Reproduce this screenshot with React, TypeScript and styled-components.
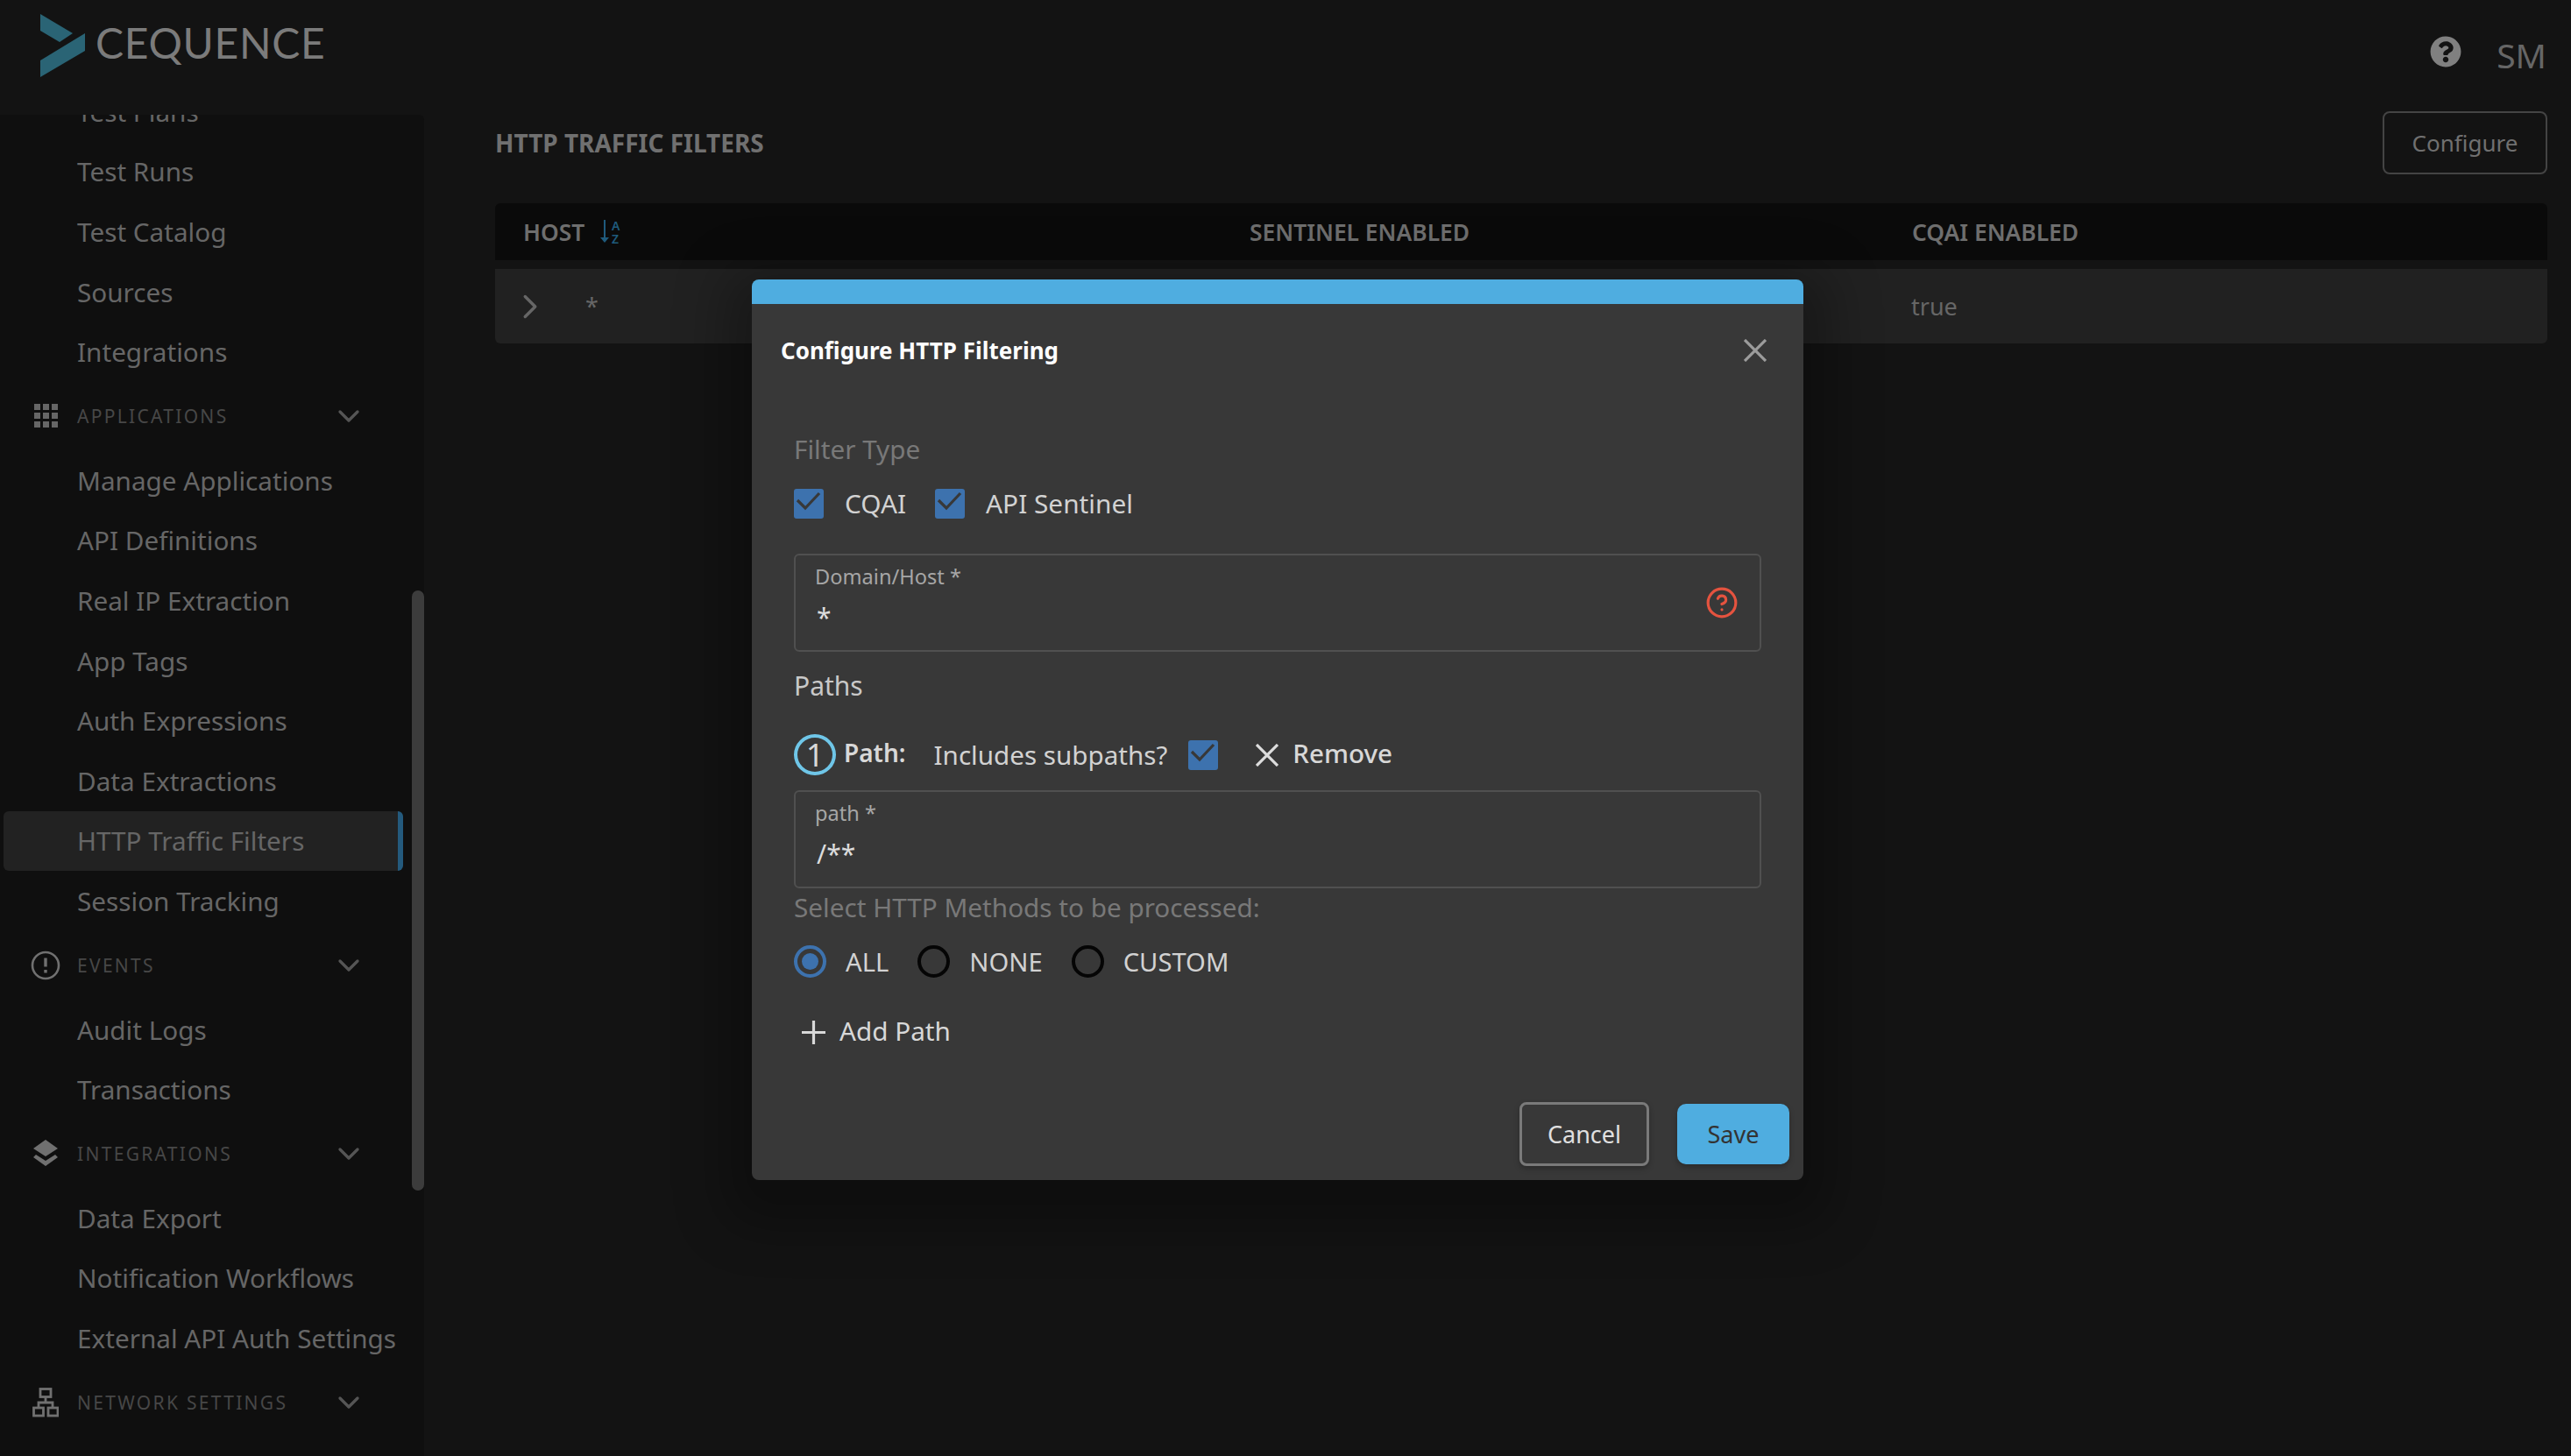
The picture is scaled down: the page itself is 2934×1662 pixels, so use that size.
import * as React from 'react'
import styled, { createGlobalStyle } from 'styled-components'
import { ChevronDown, ChevronRight, CircleHelp } from 'lucide-react'
import { FaQuestionCircle } from 'react-icons/fa'

const font = `"Noto Sans", "Open Sans", sans-serif`

const GlobalStyle = createGlobalStyle`
  html, body { margin: 0; padding: 0; background: #131313; }
  body { font-family: ${font}; }
  * { box-sizing: border-box; }
`

const Page = styled.div`
  position: relative;
  width: 2934px;
  height: 1662px;
  overflow: hidden;
  display: grid;
  grid-template-columns: 484px 1fr;
  grid-template-rows: 131px 1fr;
  background: #131313;
`

const Header = styled.header`
  grid-column: 1 / 3;
  display: flex;
  justify-content: space-between;
  padding: 16px 28px 0 46px;
`

const Logo = styled.div`
  display: flex;
  align-items: flex-start;
  gap: 12px;
`

const LogoText = styled.span`
  font-family: Lato, sans-serif;
  font-size: 48px;
  line-height: 48px;
  margin-top: 9px;
  letter-spacing: 0.7px;
  color: #7b7b7b;
`

const HeaderRight = styled.div`
  display: flex;
  align-items: flex-start;
  gap: 40px;
  padding-top: 25px;
  color: #808080;
`

const Initials = styled.span`
  font-size: 39px;
  line-height: 40px;
  margin-top: 2px;
  color: #666;
`

const Sidebar = styled.nav`
  background: #0f0f0f;
  border-top-right-radius: 6px;
  overflow: hidden;
  position: relative;
`

const NavList = styled.div`
  margin-top: -38px;
  padding-right: 24px;
`

const NavItem = styled.div<{ $active?: boolean }>`
  height: 68.6px;
  margin-left: 4px;
  padding-left: 84px;
  display: flex;
  align-items: center;
  font-size: 29.7px;
  white-space: nowrap;
  color: #666;
  border-radius: 6px;
  background: ${p => (p.$active ? '#222' : 'transparent')};
  border-right: ${p => (p.$active ? '6px solid #245a7d' : '0')};
`

const SectionHead = styled.div`
  height: 78px;
  display: grid;
  grid-template-columns: 88px 1fr 40px;
  align-items: center;
  padding-right: 42px;
  color: #666;
`

const SectionIcon = styled.span`
  display: flex;
  justify-content: center;
  width: 104px;
`

const SectionLabel = styled.span`
  font-size: 21px;
  letter-spacing: 2.3px;
  color: #474747;
`

const Scrollbar = styled.div`
  position: absolute;
  top: 543px;
  right: 0;
  width: 14px;
  height: 685px;
  border-radius: 7px;
  background: #3c3c3c;
`

const Main = styled.main`
  padding: 0 27px 0 81px;
`

const TitleRow = styled.div`
  display: flex;
  justify-content: space-between;
  align-items: flex-start;
  height: 105px;
  margin-top: -4px;
`

const PageTitle = styled.h1`
  margin: 17px 0 0;
  font-size: 28px;
  line-height: 38px;
  font-weight: 700;
  color: #707070;
`

const OutlineButton = styled.button`
  width: 188px;
  height: 72px;
  background: transparent;
  border: 2px solid #444;
  border-radius: 8px;
  font-family: ${font};
  font-size: 26px;
  color: #707070;
`

const Table = styled.div`
  display: flex;
  flex-direction: column;
  gap: 10px;
`

const TableHead = styled.div`
  display: grid;
  grid-template-columns: 829px 756px 1fr;
  align-items: center;
  height: 65px;
  padding-left: 32px;
  background: #0a0a0a;
  border-radius: 6px 6px 0 0;
`

const HeadCell = styled.div`
  display: flex;
  align-items: center;
  gap: 18px;
  font-size: 26.4px;
  font-weight: 600;
  color: #6e6e6e;
`

const TableRow = styled.div`
  display: grid;
  grid-template-columns: 86px 1513px 1fr;
  align-items: center;
  height: 85px;
  padding-left: 17px;
  background: #212121;
  border-radius: 0 0 6px 6px;
  font-size: 27px;
  color: #666;
`

const Modal = styled.section`
  position: absolute;
  top: 319px;
  left: 858px;
  width: 1200px;
  height: 1028px;
  display: flex;
  flex-direction: column;
  background: #383838;
  border-radius: 8px;
  border-top: 28px solid #4fade0;
  box-shadow: 0 20px 60px 30px rgba(0, 0, 0, 0.28);
`

const ModalHead = styled.div`
  display: flex;
  justify-content: space-between;
  align-items: center;
  height: 106px;
  padding: 0 42px 0 33px;
  color: #9c9c9c;
`

const ModalTitle = styled.h2`
  margin: 0;
  font-size: 26px;
  font-weight: 700;
  color: #fff;
`

const ModalBody = styled.div`
  flex: 1;
  padding: 40px 48px 0;
  display: flex;
  flex-direction: column;
`

const MutedText = styled.div<{ $top?: number }>`
  font-size: 29.7px;
  line-height: 40px;
  margin-top: ${p => p.$top ?? 0}px;
  color: #787878;
`

const Heading = styled.div`
  font-size: 30px;
  line-height: 40px;
  margin-top: 19px;
  color: #c8c8c8;
`

const OptionRow = styled.div<{ $top: number; $gap: number }>`
  display: flex;
  align-items: center;
  gap: ${p => p.$gap}px;
  margin-top: ${p => p.$top}px;
`

const Option = styled.label<{ $gap: number; $size: number }>`
  display: flex;
  align-items: center;
  gap: ${p => p.$gap}px;
  font-size: ${p => p.$size}px;
  line-height: 34px;
  color: #d2d2d2;
`

const CheckBox = styled.span`
  display: flex;
  align-items: center;
  justify-content: center;
  flex: none;
  width: 34px;
  height: 34px;
  border-radius: 3px;
  background: #3d72ae;
  color: #383838;
`

const Radio = styled.span<{ $on?: boolean }>`
  display: flex;
  align-items: center;
  justify-content: center;
  width: 37px;
  height: 37px;
  border-radius: 50%;
  border: 4px solid ${p => (p.$on ? '#3d72ae' : '#050505')};
  &::after {
    content: '';
    width: 19px;
    height: 19px;
    border-radius: 50%;
    background: ${p => (p.$on ? '#3d72ae' : 'transparent')};
  }
`

const Field = styled.div<{ $top: number }>`
  position: relative;
  height: 112px;
  margin-top: ${p => p.$top}px;
  padding: 8px 22px;
  border: 2px solid #505050;
  border-radius: 6px;
`

const FieldLabel = styled.div`
  font-size: 23.6px;
  line-height: 33px;
  color: #a6a6a6;
`

const FieldValue = styled.div`
  font-size: 30px;
  line-height: 40px;
  margin-top: 10px;
  padding-left: 2px;
  color: #dcdcdc;
`

const FieldHelp = styled(CircleHelp)`
  position: absolute;
  top: 35px;
  right: 24px;
  color: #e5533f;
`

const PathRow = styled.div`
  display: flex;
  align-items: center;
  height: 47px;
  margin-top: 35px;
`

const StepBadge = styled.span`
  display: flex;
  align-items: center;
  justify-content: center;
  width: 48px;
  height: 47px;
  border: 4px solid #6fc6e8;
  border-radius: 50%;
  font-size: 36px;
  color: #d8d8d8;
`

const PathLabel = styled.span`
  margin: -5px 32px 0 9px;
  font-size: 28px;
  font-weight: 600;
  color: #d8d8d8;
`

const SubpathText = styled.span`
  font-size: 29.6px;
  margin-right: 24px;
  color: #d2d2d2;
`

const RemoveGlyph = styled.span`
  display: flex;
  margin-left: 43px;
  color: #ddd;
`

const RemoveText = styled.span`
  margin: -4px 0 0 16px;
  font-size: 29.6px;
  font-weight: 500;
  color: #d8d8d8;
`

const AddPath = styled.div`
  display: flex;
  align-items: center;
  gap: 16px;
  height: 40px;
  margin-top: 40px;
  padding-left: 9px;
  font-size: 29.7px;
  color: #d8d8d8;
  svg {
    margin-top: 4px;
  }
`

const Actions = styled.div`
  display: flex;
  justify-content: flex-end;
  align-items: center;
  gap: 32px;
  padding: 0 16px 16px;
`

const CancelButton = styled.button`
  width: 148px;
  height: 73px;
  background: transparent;
  border: 3px solid #7a7a7a;
  border-radius: 8px;
  font-family: ${font};
  font-size: 27px;
  color: #e0e0e0;
  box-shadow: 0 3px 6px rgba(0, 0, 0, 0.25);
`

const SaveButton = styled.button`
  width: 128px;
  height: 69px;
  background: #4fade0;
  border: 0;
  border-radius: 10px;
  font-family: ${font};
  font-size: 27px;
  color: #333;
  box-shadow: 0 3px 6px rgba(0, 0, 0, 0.25);
`

const RowChevron = styled(ChevronRight)`
  display: block;
`

const LogoMark = () => (
  <svg width="51" height="72" viewBox="0 0 51 72">
    <polygon points="0,0 37,22 22,32 0,19" fill="#2a6475" />
    <polygon points="51,22 51,42 0,72 0,53" fill="#2a6475" />
  </svg>
)

const GridIcon = () => (
  <svg width="27" height="27" viewBox="0 0 27 27" fill="#666">
    {[0, 10, 20].map(y => [0, 10, 20].map(x => <rect key={`${x}-${y}`} x={x} y={y} width="7" height="7" />))}
  </svg>
)

const AlertIcon = () => (
  <svg width="34" height="34" viewBox="0 0 34 34" fill="none" stroke="#707070">
    <circle cx="17" cy="17" r="15" strokeWidth="2.6" />
    <path d="M17 8.5v10M17 22v3.5" strokeWidth="3.4" />
  </svg>
)

const LayersIcon = () => (
  <svg width="30" height="32" viewBox="0 0 30 32" fill="#707070">
    <polygon points="15,0 29,10 15,19 1,10" />
    <polygon points="4,17 15,24 26,17 29,20 15,30 1,20" />
  </svg>
)

const NetworkIcon = () => (
  <svg width="30" height="34" viewBox="0 0 30 34" fill="none" stroke="#707070" strokeWidth="2.8">
    <rect x="9" y="1.5" width="12" height="9" />
    <rect x="1.5" y="23" width="11" height="9" />
    <rect x="18" y="23" width="11" height="9" />
    <path d="M15 10.5v6M7 23v-6h16v6" />
  </svg>
)

const SortIcon = () => (
  <svg width="27" height="28" viewBox="0 0 27 28" fill="#1f5b7d">
    <path d="M5 0v22" stroke="#1f5b7d" strokeWidth="2" />
    <polygon points="0,20 10,20 5,26" />
    <text x="13" y="12" fontSize="14" fontFamily="Noto Sans">A</text>
    <text x="13" y="27" fontSize="14" fontFamily="Noto Sans">Z</text>
  </svg>
)

const Tick = () => (
  <svg width="34" height="34" viewBox="0 0 34 34" fill="none" stroke="currentColor" strokeWidth="3.2">
    <path d="M4 13l9 9L29 5" />
  </svg>
)

const Cross = () => (
  <svg width="26" height="26" viewBox="0 0 26 26" fill="none" stroke="currentColor" strokeWidth="3.2">
    <path d="M1 1l24 24M25 1L1 25" />
  </svg>
)

const PlusGlyph = () => (
  <svg width="27" height="27" viewBox="0 0 27 27" fill="none" stroke="currentColor" strokeWidth="3.2">
    <path d="M13.5 0v27M0 13.5h27" />
  </svg>
)

const Section = ({ label, icon }: { label: string; icon: React.ReactNode }) => (
  <SectionHead>
    <SectionIcon>{icon}</SectionIcon>
    <SectionLabel>{label}</SectionLabel>
    <ChevronDown size={40} strokeWidth={2} color="#555" />
  </SectionHead>
)

const Items = ({ names, active }: { names: string[]; active?: string }) => (
  <>
    {names.map(n => (
      <NavItem key={n} $active={n === active}>
        {n}
      </NavItem>
    ))}
  </>
)

const CheckOption = ({ label }: { label: string }) => (
  <Option $gap={24} $size={29.8}>
    <CheckBox>
      <Tick />
    </CheckBox>
    {label}
  </Option>
)

const RadioOption = ({ label, on }: { label: string; on?: boolean }) => (
  <Option $gap={22} $size={29.2}>
    <Radio $on={on} />
    {label}
  </Option>
)

const App = () => (
  <Page>
    <GlobalStyle />
    <Header>
      <Logo>
        <LogoMark />
        <LogoText>CEQUENCE</LogoText>
      </Logo>
      <HeaderRight>
        <FaQuestionCircle size={36} />
        <Initials>SM</Initials>
      </HeaderRight>
    </Header>

    <Sidebar>
      <NavList>
        <Items names={['Test Plans', 'Test Runs', 'Test Catalog', 'Sources', 'Integrations']} />
        <Section label="APPLICATIONS" icon={<GridIcon />} />
        <Items
          active="HTTP Traffic Filters"
          names={[
            'Manage Applications',
            'API Definitions',
            'Real IP Extraction',
            'App Tags',
            'Auth Expressions',
            'Data Extractions',
            'HTTP Traffic Filters',
            'Session Tracking',
          ]}
        />
        <Section label="EVENTS" icon={<AlertIcon />} />
        <Items names={['Audit Logs', 'Transactions']} />
        <Section label="INTEGRATIONS" icon={<LayersIcon />} />
        <Items names={['Data Export', 'Notification Workflows', 'External API Auth Settings']} />
        <Section label="NETWORK SETTINGS" icon={<NetworkIcon />} />
      </NavList>
      <Scrollbar />
    </Sidebar>

    <Main>
      <TitleRow>
        <PageTitle>HTTP TRAFFIC FILTERS</PageTitle>
        <OutlineButton>Configure</OutlineButton>
      </TitleRow>
      <Table>
        <TableHead>
          <HeadCell>
            HOST <SortIcon />
          </HeadCell>
          <HeadCell>SENTINEL ENABLED</HeadCell>
          <HeadCell>CQAI ENABLED</HeadCell>
        </TableHead>
        <TableRow>
          <RowChevron size={46} strokeWidth={1.8} />
          <span>*</span>
          <span>true</span>
        </TableRow>
      </Table>
    </Main>

    <Modal>
      <ModalHead>
        <ModalTitle>Configure HTTP Filtering</ModalTitle>
        <Cross />
      </ModalHead>
      <ModalBody>
        <MutedText>Filter Type</MutedText>
        <OptionRow $top={25} $gap={33}>
          <CheckOption label="CQAI" />
          <CheckOption label="API Sentinel" />
        </OptionRow>
        <Field $top={40}>
          <FieldLabel>Domain/Host *</FieldLabel>
          <FieldValue>*</FieldValue>
          <FieldHelp size={38} strokeWidth={2} />
        </Field>
        <Heading>Paths</Heading>
        <PathRow>
          <StepBadge>1</StepBadge>
          <PathLabel>Path:</PathLabel>
          <SubpathText>Includes subpaths?</SubpathText>
          <CheckBox>
            <Tick />
          </CheckBox>
          <RemoveGlyph>
            <Cross />
          </RemoveGlyph>
          <RemoveText>Remove</RemoveText>
        </PathRow>
        <Field $top={17}>
          <FieldLabel>path *</FieldLabel>
          <FieldValue>/**</FieldValue>
        </Field>
        <MutedText $top={2}>Select HTTP Methods to be processed:</MutedText>
        <OptionRow $top={23} $gap={33}>
          <RadioOption label="ALL" on />
          <RadioOption label="NONE" />
          <RadioOption label="CUSTOM" />
        </OptionRow>
        <AddPath>
          <PlusGlyph />
          Add Path
        </AddPath>
      </ModalBody>
      <Actions>
        <CancelButton>Cancel</CancelButton>
        <SaveButton>Save</SaveButton>
      </Actions>
    </Modal>
  </Page>
)

export default App
